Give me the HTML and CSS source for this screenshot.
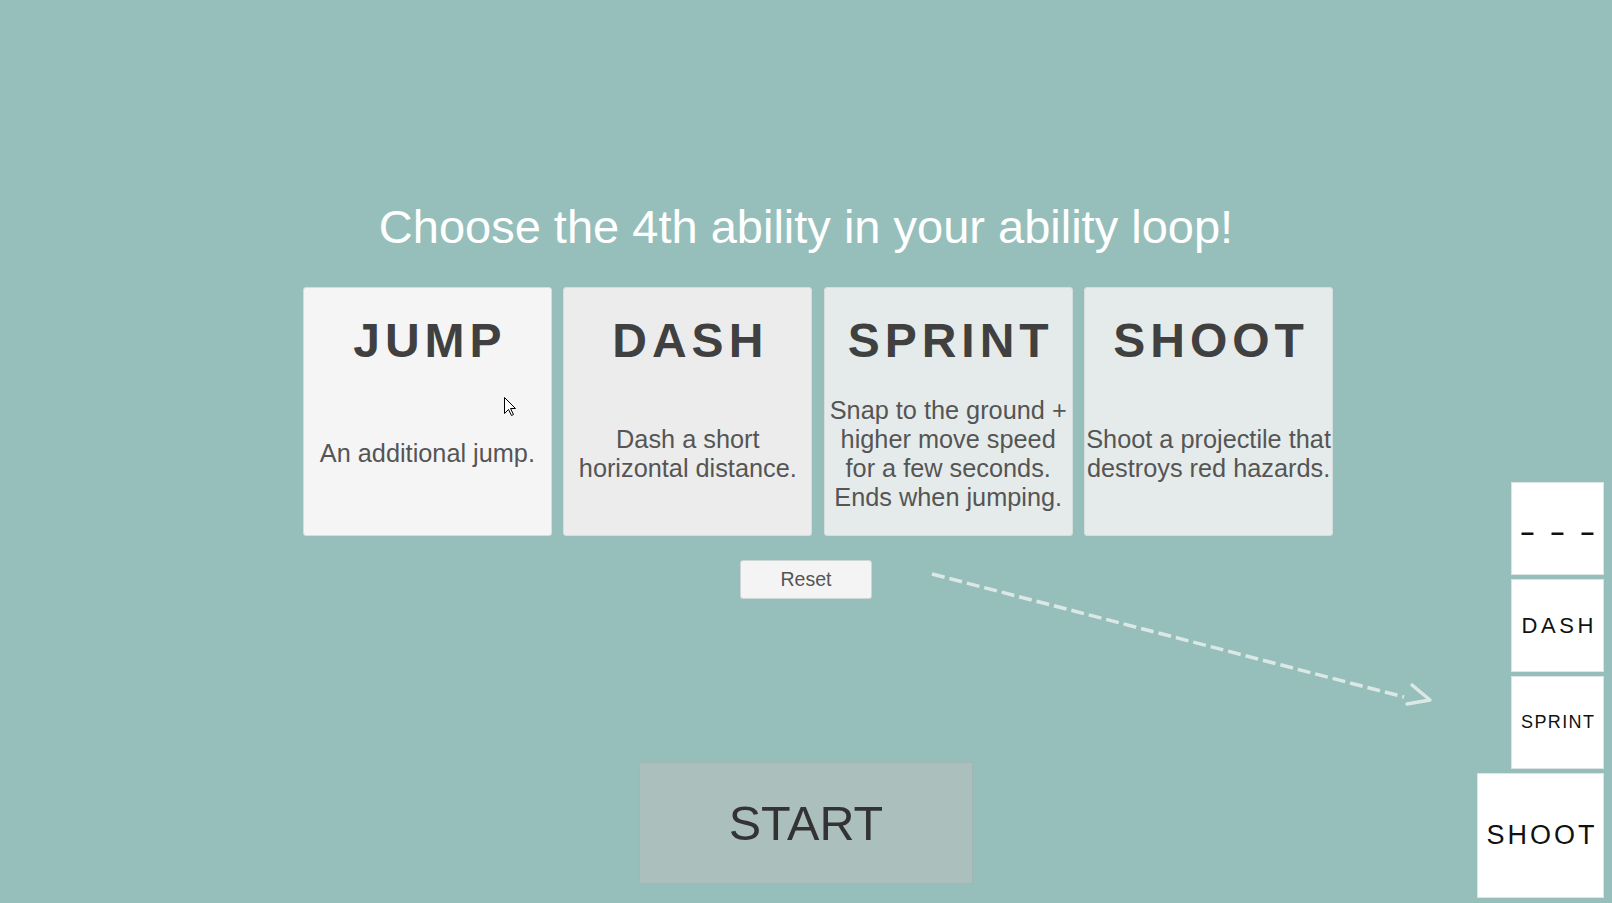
FILE: index.html
```html
<!DOCTYPE html>
<html>
<head lang="en">
    <meta charset="UTF-8">
    <title>Ability Loop</title>
    <link rel="stylesheet" href="styles.css">
</head>
<body>
<div id="screen">
    <div class="side"></div>
    <div id="main">
        <h1 id="title">Choose the 4th ability in your ability loop!</h1>
        <div id="cards">
            <div class="card hover">
                <div class="card-name">JUMP</div>
                <div class="card-desc">An additional jump.</div>
            </div>
            <div class="card pressed">
                <div class="card-name">DASH</div>
                <div class="card-desc">Dash a short<br>horizontal distance.</div>
            </div>
            <div class="card">
                <div class="card-name">SPRINT</div>
                <div class="card-desc">Snap to the ground +<br>higher move speed<br>for a few seconds.<br>Ends when jumping.</div>
            </div>
            <div class="card">
                <div class="card-name">SHOOT</div>
                <div class="card-desc">Shoot a projectile that<br>destroys red hazards.</div>
            </div>
        </div>
        <div id="reset">Reset</div>
        <div id="start">START</div>
    </div>
    <div class="side" id="loop">
        <div class="slot empty">&ndash; &ndash; &ndash;</div>
        <div class="slot dash">DASH</div>
        <div class="slot sprint">SPRINT</div>
        <div class="slot current">SHOOT</div>
    </div>
</div>
<svg id="overlay" width="1612" height="903" viewBox="0 0 1612 903">
    <line class="trail" x1="932" y1="574" x2="1404" y2="697"/>
    <polyline class="head" points="1412,685 1430,700 1407,704"/>
    <path class="cursor" d="M504.5 397.5 L504.5 413.5 L508.5 409.5 L511.5 415.5 L513.5 414.5 L510.5 408.5 L515.5 408.5 Z"/>
</svg>
</body>
</html>
```

FILE: styles.css
```css
*{
    margin: 0;
    padding: 0;
    box-sizing: border-box;
}
body{
    background: #96bfbc;
    font-family: "Liberation Sans", Arial, sans-serif;
    width: 1612px;
    height: 903px;
    overflow: hidden;
    position: relative;
}
#screen{
    display: grid;
    grid-template-columns: 1fr auto 1fr;
    height: 903px;
}
#main{
    display: flex;
    flex-direction: column;
    align-items: center;
    padding-top: 199px;
}
#title{
    color: #ffffff;
    font-weight: normal;
    font-size: 47px;
    line-height: 56px;
    white-space: nowrap;
}
#cards{
    display: flex;
    gap: 11.4px;
    margin-top: 32px;
    padding-left: 24px;
}
.card{
    width: 249px;
    height: 249px;
    background: #e5ebea;
    border: 1px solid #d6dedd;
    border-radius: 3px;
    display: flex;
    flex-direction: column;
    text-align: center;
}
.card.hover{
    background: #f5f5f5;
}
.card.pressed{
    background: #ececec;
}
.card-name{
    padding-top: 25px;
    font-size: 48px;
    line-height: 56px;
    font-weight: bold;
    letter-spacing: 5px;
    text-indent: 5px;
    color: #404040;
}
.card-desc{
    flex: 1;
    display: flex;
    align-items: center;
    justify-content: center;
    padding-top: 3px;
    font-size: 25.3px;
    line-height: 29px;
    color: #555555;
    white-space: nowrap;
}
#reset{
    margin-top: 24px;
    width: 132px;
    height: 39px;
    background: #f4f4f4;
    border: 1px solid #cdd6d5;
    border-radius: 3px;
    color: #555555;
    font-size: 19.5px;
    line-height: 37px;
    text-align: center;
}
#start{
    margin-top: 163px;
    width: 334px;
    height: 122px;
    background: #abc0bd;
    border: 1px solid #a0b7b4;
    border-radius: 2px;
    color: #333333;
    font-size: 48.5px;
    line-height: 120px;
    text-align: center;
}
#loop{
    display: flex;
    flex-direction: column;
    justify-content: flex-end;
    align-items: flex-end;
    gap: 4px;
    padding: 0 8px 5px 0;
}
.slot{
    width: 93px;
    height: 93px;
    background: #ffffff;
    border: 1px solid #dde5e4;
    display: flex;
    align-items: center;
    justify-content: center;
    color: #111111;
    white-space: nowrap;
}
.slot.empty{
    font-size: 24px;
    font-weight: bold;
    letter-spacing: 5px;
    text-indent: 5px;
    padding-top: 6px;
}
.slot.dash{
    font-size: 22px;
    letter-spacing: 3.6px;
    text-indent: 3.6px;
}
.slot.sprint{
    font-size: 18px;
    letter-spacing: 1.4px;
    text-indent: 1.4px;
}
.slot.current{
    width: 127px;
    height: 125px;
    font-size: 27px;
    letter-spacing: 3px;
    text-indent: 3px;
}
#overlay{
    position: absolute;
    left: 0;
    top: 0;
    pointer-events: none;
}
#overlay .trail{
    stroke: #dbe8e6;
    stroke-width: 3.5;
    stroke-dasharray: 13 5;
}
#overlay .head{
    fill: none;
    stroke: #dbe8e6;
    stroke-width: 3.5;
    stroke-linecap: round;
    stroke-linejoin: round;
}
#overlay .cursor{
    fill: #ffffff;
    stroke: #000000;
    stroke-width: 1;
    stroke-linejoin: miter;
}
```
